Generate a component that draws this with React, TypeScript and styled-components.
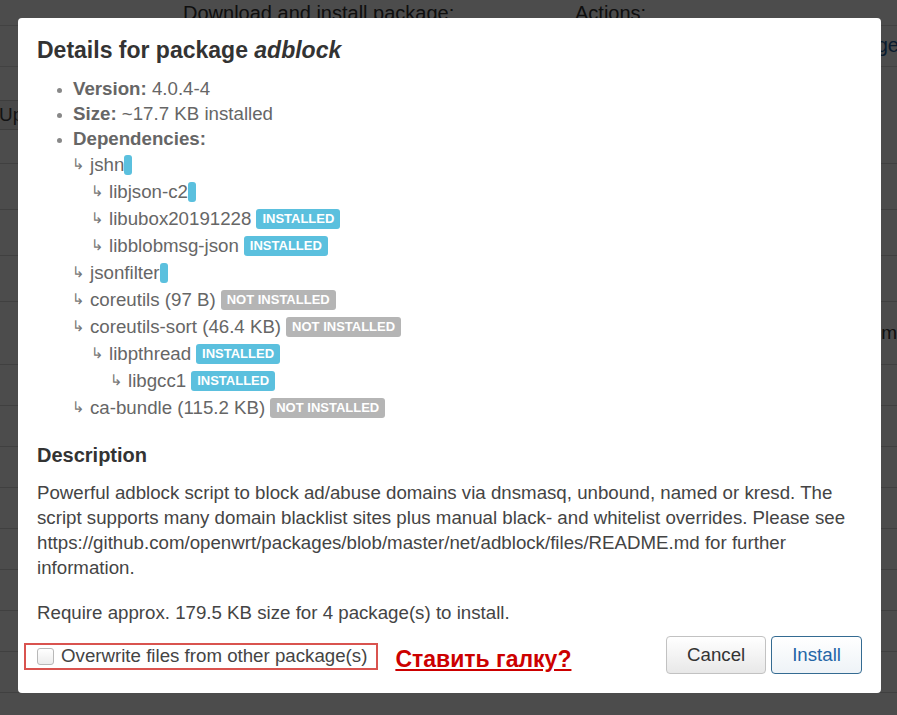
import React from "react";
import styled, { createGlobalStyle } from "styled-components";

const Global = createGlobalStyle`
  html, body { margin: 0; padding: 0; }
  body {
    font-family: "Liberation Sans", Arial, sans-serif;
    background: #ffffff;
    width: 897px;
    height: 715px;
    overflow: hidden;
  }
`;

const Page = styled.div`
  width: 897px;
  height: 715px;
  background: #fff;
  color: #333;
  font-size: 20px;
  overflow: hidden;
`;

const PageHeader = styled.div`
  display: flex;
  padding: 2px 0 0 183px;
  height: 22px;
  line-height: 22px;
`;

const HeaderCell = styled.div<{ $w: number }>`
  width: ${(p) => p.$w}px;
  white-space: nowrap;
`;

const TopBar = styled.div`
  display: flex;
  justify-content: flex-end;
  height: 40px;
  border-top: 1px solid #ddd;
  border-bottom: 1px solid #ddd;
  margin-top: 1px;
`;

const BlueButton = styled.div`
  margin-right: -2px;
  padding: 0 0 0 12px;
  color: #1f5d99;
  line-height: 38px;
  white-space: nowrap;
`;

const Row = styled.div<{ $h: number }>`
  height: ${(p) => p.$h}px;
  border-bottom: 1px solid #d8d8d8;
  display: flex;
  align-items: center;
  justify-content: space-between;
`;

const GhostButton = styled.div`
  margin-left: -12px;
  padding: 0 10px;
  height: 28px;
  line-height: 28px;
  background: #f2f2f2;
  border: 1px solid #ccc;
  border-radius: 3px;
  color: #444;
  font-size: 19px;
  white-space: nowrap;
`;

const GhostText = styled.div`
  margin-right: 0;
  color: #333;
  font-size: 19px;
`;

const Overlay = styled.div`
  position: fixed;
  inset: 0;
  background: rgba(0, 0, 0, 0.7);
  display: flex;
  align-items: flex-start;
  justify-content: flex-start;
  padding: 18px 0 0 18px;
`;

const Modal = styled.div`
  width: 863px;
  height: 675px;
  box-sizing: border-box;
  background: #fff;
  border-radius: 4px;
  padding: 18px 19px 19px 19px;
  color: #666;
  font-size: 18.7px;
  display: flex;
  flex-direction: column;
`;

const Title = styled.h4`
  margin: 0 0 12px 0;
  font-size: 23px;
  line-height: 28px;
  font-weight: bold;
  color: #333;
  em { font-style: italic; }
`;

const DetailList = styled.ul`
  margin: 0;
  padding-left: 36px;
  list-style: disc;
  line-height: 25px;
  li::marker { color: #888; font-size: 15px; }
`;

const Label = styled.strong`
  color: #666;
`;

const Tree = styled.ul`
  list-style: none;
  margin: 0;
  padding: 0;
  line-height: 27px;
`;

const TreeItem = styled.li<{ $level: number }>`
  padding-left: ${(p) => (p.$level - 1) * 19}px;
  white-space: nowrap;
  display: flex;
  align-items: center;
  height: 27px;
`;

const Arrow = styled.span`
  display: inline-block;
  width: 18px;
  margin-left: -1px;
  font-family: "DejaVu Sans", sans-serif;
  font-size: 15px;
  color: #777;
`;

const Badge = styled.span<{ $kind: "ok" | "no" }>`
  display: inline-block;
  background: ${(p) => (p.$kind === "ok" ? "#5bc0de" : "#b5b5b5")};
  color: #fff;
  font-size: 13px;
  font-weight: bold;
  line-height: 20px;
  height: 20px;
  padding: 0 6px;
  border-radius: 3px;
  margin-left: ${(p) => (p.children ? 5 : 0)}px;
  &:empty { padding: 0 4px; }
`;

const Name = styled.span`
  color: #666;
`;

const DescTitle = styled.h5`
  margin: 22px 0 0 0;
  font-size: 20px;
  line-height: 24px;
  font-weight: bold;
  color: #333;
`;

const Para = styled.p<{ $mt: number }>`
  margin: ${(p) => p.$mt}px 0 0 0;
  line-height: 25px;
  color: #444;
`;

const Footer = styled.div`
  margin-top: 11px;
  display: flex;
  align-items: center;
  height: 38px;
`;

const CheckBoxFrame = styled.label`
  display: flex;
  align-items: center;
  gap: 7px;
  margin-left: -13px;
  margin-top: 2px;
  padding: 0 9px 0 11px;
  height: 23px;
  border: 2px solid #d9534f;
  color: #444;
`;

const Check = styled.span`
  display: inline-block;
  width: 15px;
  height: 15px;
  border: 1px solid #b8b8b8;
  border-radius: 3px;
  background: linear-gradient(#ffffff, #ececec);
`;

const Question = styled.span`
  margin-left: 17px;
  margin-top: 8px;
  color: #cc0000;
  font-weight: bold;
  font-size: 23px;
  text-decoration: underline;
  text-underline-offset: 2px;
`;

const Spacer = styled.div`
  flex: 1;
`;

const Button = styled.button<{ $primary?: boolean }>`
  font-family: "Liberation Sans", Arial, sans-serif;
  font-size: 18.7px;
  height: 38px;
  padding: 0 20px;
  border-radius: 4px;
  border: 1px solid ${(p) => (p.$primary ? "#346b92" : "#c2c2c2")};
  background: ${(p) =>
    p.$primary ? "linear-gradient(#ffffff, #eef3f7)" : "linear-gradient(#ffffff, #e8e8e8)"};
  color: ${(p) => (p.$primary ? "#2466a6" : "#333")};
  margin-left: ${(p) => (p.$primary ? 5 : 0)}px;
`;

type Dep = { level: number; name: string; badge?: "ok" | "no" | "empty" };

const deps: Dep[] = [
  { level: 1, name: "jshn", badge: "empty" },
  { level: 2, name: "libjson-c2", badge: "empty" },
  { level: 2, name: "libubox20191228", badge: "ok" },
  { level: 2, name: "libblobmsg-json", badge: "ok" },
  { level: 1, name: "jsonfilter", badge: "empty" },
  { level: 1, name: "coreutils (97 B)", badge: "no" },
  { level: 1, name: "coreutils-sort (46.4 KB)", badge: "no" },
  { level: 2, name: "libpthread", badge: "ok" },
  { level: 3, name: "libgcc1", badge: "ok" },
  { level: 1, name: "ca-bundle (115.2 KB)", badge: "no" },
];

const rowHeights = [96, 45, 45, 45, 62, 40, 40, 40, 40, 40, 40, 40, 40, 40];

export default function App() {
  return (
    <>
      <Global />
      <Page>
        <PageHeader>
          <HeaderCell $w={392}>Download and install package:</HeaderCell>
          <HeaderCell $w={200}>Actions:</HeaderCell>
        </PageHeader>
        <TopBar>
          <BlueButton>Filter package</BlueButton>
        </TopBar>
        {rowHeights.map((h, i) => (
          <Row key={i} $h={h}>
            {i === 0 ? <GhostButton>Update lists</GhostButton> : <span />}
            {i === 4 ? <GhostText>m</GhostText> : <span />}
          </Row>
        ))}
      </Page>
      <Overlay>
        <Modal>
          <Title>
            Details for package <em>adblock</em>
          </Title>
          <DetailList>
            <li>
              <Label>Version:</Label> 4.0.4-4
            </li>
            <li>
              <Label>Size:</Label> ~17.7 KB installed
            </li>
            <li>
              <Label>Dependencies:</Label>
              <Tree>
                {deps.map((d) => (
                  <TreeItem key={d.name} $level={d.level}>
                    <Arrow>↳</Arrow>
                    <Name>{d.name}</Name>
                    {d.badge === "empty" && <Badge $kind="ok" />}
                    {d.badge === "ok" && <Badge $kind="ok">INSTALLED</Badge>}
                    {d.badge === "no" && <Badge $kind="no">NOT INSTALLED</Badge>}
                  </TreeItem>
                ))}
              </Tree>
            </li>
          </DetailList>
          <DescTitle>Description</DescTitle>
          <Para $mt={13}>
            Powerful adblock script to block ad/abuse domains via dnsmasq, unbound, named or kresd. The
            script supports many domain blacklist sites plus manual black- and whitelist overrides. Please see
            https://github.com/openwrt/packages/blob/master/net/adblock/files/README.md for further
            information.
          </Para>
          <Para $mt={20}>Require approx. 179.5 KB size for 4 package(s) to install.</Para>
          <Footer>
            <CheckBoxFrame>
              <Check />
              Overwrite files from other package(s)
            </CheckBoxFrame>
            <Question>Ставить галку?</Question>
            <Spacer />
            <Button>Cancel</Button>
            <Button $primary>Install</Button>
          </Footer>
        </Modal>
      </Overlay>
    </>
  );
}
